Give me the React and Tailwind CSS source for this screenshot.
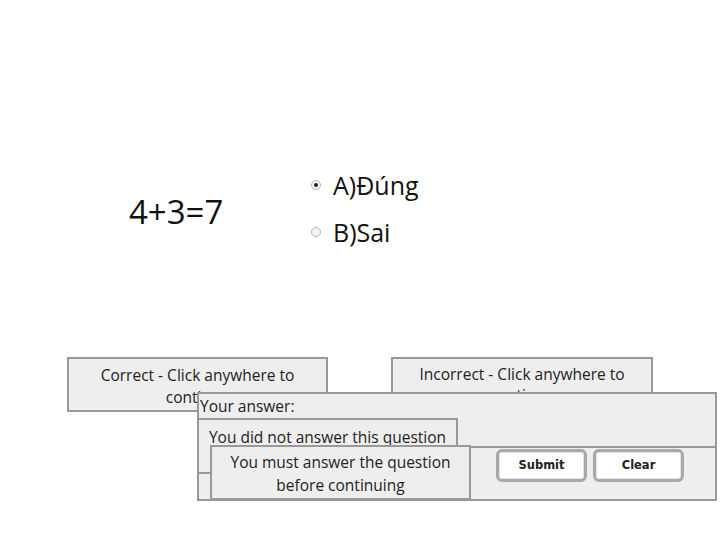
import React from 'react';

const box = "absolute bg-[#eeeeee] border-2 border-[#999999] text-[#222222] text-center text-[15.5px]";
const btn = "w-[91px] h-[33px] rounded-[6px] border-[3px] border-[#a9a9a9] bg-white shadow-[inset_0_0_0_1px_#e4e4e4] flex items-center justify-center text-[11.5px] font-bold text-[#222222] font-['DejaVu_Sans',sans-serif]";

const Radio = ({ checked }) => (
    <span className="w-[10px] h-[10px] rounded-full border border-[#b5b5b5] bg-[#f4f4f4] flex items-center justify-center shrink-0">
        {checked && <span className="w-[4px] h-[4px] rounded-full bg-[#222222]" />}
    </span>
);

const options = [
    { label: 'A)Đúng', checked: true },
    { label: 'B)Sai', checked: false },
];

const App = () => {
    return (
        <div className="w-[720px] h-[540px] bg-white overflow-hidden font-['Open_Sans',sans-serif] text-[#111111] flex flex-col">
            {/* question */}
            <div className="pt-[166px] pl-[129px] flex items-center">
                <div className="w-[182px] text-[33px] leading-[40px] pt-[6px]">4+3=7</div>
                <div className="flex flex-col gap-[9px]">
                    {options.map(o => (
                        <label key={o.label} className="flex items-center gap-[12px] text-[25px] leading-[38px]">
                            <Radio checked={o.checked} />
                            <span>{o.label}</span>
                        </label>
                    ))}
                </div>
            </div>

            {/* feedback popups, stacked over each other */}
            <div className="relative flex-1 mt-[106px]">
                <div className={`${box} left-[67px] top-0 w-[261px] h-[55px] pt-[5px] leading-[22px]`}>
                    Correct - Click anywhere to<br />continue
                </div>
                <div className={`${box} left-[391px] top-0 w-[262px] h-[55px] pt-[5px] leading-[21px]`}>
                    Incorrect - Click anywhere to<br />continue
                </div>

                {/* review panel */}
                <div className={`${box} left-[197px] top-[35px] w-[520px] h-[109px] text-left flex flex-col`}>
                    <div className="pl-[1px] pt-[1px] leading-[22px]">Your answer:</div>
                    <div className="mt-auto mx-[-2px] mb-[-2px] h-[55px] border-2 border-[#999999] flex items-start pt-[1px] gap-[6px] pl-[297px]">
                        <button className={btn}>Submit</button>
                        <button className={btn}>Clear</button>
                    </div>
                </div>
                <div className={`${box} left-[197px] top-[61px] w-[261px] h-[56px] pt-[6px] leading-[22px]`}>
                    You did not answer this question
                </div>
                <div className={`${box} left-[210px] top-[88px] w-[261px] h-[55px] pt-[4px] leading-[23px]`}>
                    You must answer the question<br />before continuing
                </div>
            </div>
        </div>
    );
};

export default App;
